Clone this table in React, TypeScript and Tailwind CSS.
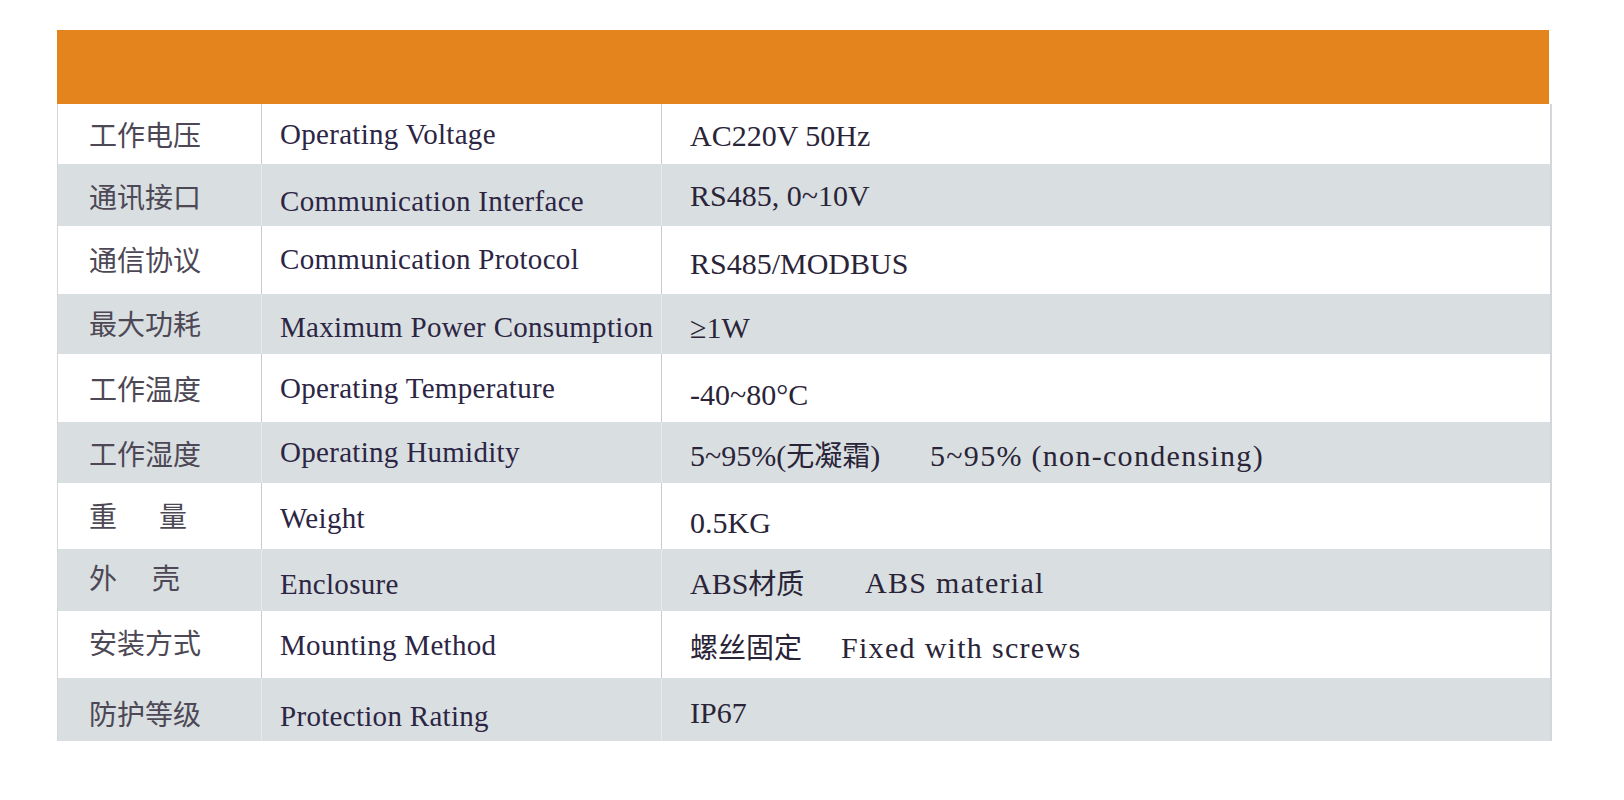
import React from 'react'

interface SpecRow {
  zh: React.ReactNode
  en: string
  val: React.ReactNode
  val2?: string
  valW?: string
  h: string
  nudge: [number, number, number]
}

// small vertical nudges, the source table is a scan and rows are not perfectly aligned
const nudgeCls: Record<number, string> = {
  [-3]: 'pb-[6px]',
  [-1]: 'pb-[2px]',
  0: '',
  1: 'pt-[2px]',
  2: 'pt-[4px]',
  3: 'pt-[6px]',
  4: 'pt-[8px]',
  6: 'pt-[12px]',
  7: 'pt-[14px]',
}

const Cjk = ({ children }: { children: React.ReactNode }) => (
  <span className="text-[28px] tracking-normal font-['Noto_Sans_CJK_SC',sans-serif]">{children}</span>
)

const rows: SpecRow[] = [
  { zh: '工作电压', en: 'Operating Voltage', val: 'AC220V 50Hz', h: 'h-[60px]', nudge: [0, 0, 2] },
  { zh: '通讯接口', en: 'Communication Interface', val: 'RS485, 0~10V', h: 'h-[62px]', nudge: [1, 6, 1] },
  { zh: '通信协议', en: 'Communication Protocol', val: 'RS485/MODBUS', h: 'h-[68px]', nudge: [-1, -1, 4] },
  { zh: '最大功耗', en: 'Maximum Power Consumption', val: '≥1W', h: 'h-[60px]', nudge: [-1, 3, 4] },
  { zh: '工作温度', en: 'Operating Temperature', val: '-40~80°C', h: 'h-[68px]', nudge: [0, 0, 7] },
  {
    zh: '工作湿度',
    en: 'Operating Humidity',
    val: (
      <>
        5~95%(<Cjk>无凝霜</Cjk>)
      </>
    ),
    val2: '5~95% (non-condensing)',
    valW: 'w-[240px]',
    h: 'h-[61px]',
    nudge: [0, 0, 3],
  },
  {
    zh: (
      <>
        重<span className="ml-[42px]">量</span>
      </>
    ),
    en: 'Weight',
    val: '0.5KG',
    h: 'h-[66px]',
    nudge: [-1, 2, 7],
  },
  {
    zh: (
      <>
        外<span className="ml-[35px]">壳</span>
      </>
    ),
    en: 'Enclosure',
    val: (
      <>
        ABS<Cjk>材质</Cjk>
      </>
    ),
    val2: 'ABS material',
    valW: 'w-[175px]',
    h: 'h-[62px]',
    nudge: [-3, 4, 3],
  },
  {
    zh: '安装方式',
    en: 'Mounting Method',
    val: <Cjk>螺丝固定</Cjk>,
    val2: 'Fixed with screws',
    valW: 'w-[151px]',
    h: 'h-[67px]',
    nudge: [-3, 1, 3],
  },
  { zh: '防护等级', en: 'Protection Rating', val: 'IP67', h: 'h-[63px]', nudge: [3, 7, 3] },
]

export default function App() {
  return (
    <div className="min-h-screen bg-white">
      <div className="pt-[30px] pl-[57px]">
        <div className="w-[1495px]">
          {/* 标题栏 */}
          <div className="h-[74px] w-[1492px] bg-[#e4841c]" />

          {/* 参数表 */}
          <div className="border-l border-r-2 border-[#d3d7db]">
            {rows.map((row, i) => {
              const gray = i % 2 === 1
              const divider = gray ? 'border-[#e6e9eb]' : 'border-[#cac8d3]'
              return (
                <div
                  key={i}
                  className={`flex ${row.h} ${gray ? 'bg-[#d9dee1]' : 'bg-white'}`}
                >
                  <div
                    className={`flex w-[204px] shrink-0 items-center border-r ${divider} pl-[31px] text-[28px] text-[#4d4855] font-['Noto_Sans_CJK_SC',sans-serif] ${nudgeCls[row.nudge[0]]}`}
                  >
                    <span className="leading-none">{row.zh}</span>
                  </div>
                  <div
                    className={`flex w-[400px] shrink-0 items-center border-r ${divider} pl-[18px] text-[29px] tracking-[0.3px] text-[#2c2544] font-['Liberation_Serif','Noto_Sans_CJK_SC',serif] ${nudgeCls[row.nudge[1]]}`}
                  >
                    <span className="leading-none whitespace-nowrap">{row.en}</span>
                  </div>
                  <div
                    className={`flex flex-1 items-center pl-[28px] text-[30px] text-[#2a2438] font-['Liberation_Serif','Noto_Sans_CJK_SC',serif] ${nudgeCls[row.nudge[2]]}`}
                  >
                    <span className={`leading-none whitespace-nowrap ${row.valW ?? ''}`}>{row.val}</span>
                    {row.val2 && (
                      <span className="leading-none whitespace-nowrap tracking-[1.3px]">{row.val2}</span>
                    )}
                  </div>
                </div>
              )
            })}
          </div>
        </div>
      </div>
    </div>
  )
}
